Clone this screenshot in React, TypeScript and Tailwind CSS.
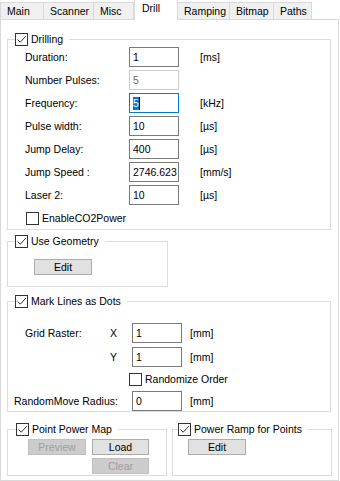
import React from 'react';

const tabs = [
  { label: 'Main', w: 'w-[44px]' },
  { label: 'Scanner', w: 'w-[51px]' },
  { label: 'Misc', w: 'w-[41px]' },
  { label: 'Drill', w: 'w-[44px]', active: true },
  { label: 'Ramping', w: 'w-[53px]' },
  { label: 'Bitmap', w: 'w-[45px]' },
  { label: 'Paths', w: 'w-[39px]' },
];

function Check({ checked }: { checked?: boolean }) {
  return (
    <span className="flex h-[13px] w-[13px] shrink-0 items-center justify-center border border-[#333333] bg-white">
      {checked && (
        <svg width="11" height="11" viewBox="0 0 11 11">
          <path d="M1.5 5.5 L4.2 8.2 L9.8 2.2" fill="none" stroke="#333333" strokeWidth="1" />
        </svg>
      )}
    </span>
  );
}

function TextBox({ value, disabled, focused }: { value: string; disabled?: boolean; focused?: boolean }) {
  return (
    <div
      className={
        'flex h-[20px] w-[50px] shrink-0 items-center bg-white pl-[3px] ' +
        (disabled
          ? 'border border-[#cccccc] text-[#6d6d6d]'
          : focused
            ? 'border border-[#0078d7]'
            : 'border border-[#7a7a7a]')
      }
    >
      {focused ? (
        <>
          <span className="bg-[#0078d7] text-white">{value}</span>
          <span className="h-[13px] w-px bg-black" />
        </>
      ) : (
        value
      )}
    </div>
  );
}

function Button({ label, disabled, className = '' }: { label: string; disabled?: boolean; className?: string }) {
  return (
    <div
      className={
        'flex h-[16px] items-center justify-center border ' +
        (disabled ? 'border-[#bfbfbf] bg-[#cccccc] text-[#838383] ' : 'border-[#adadad] bg-[#e1e1e1] ') +
        className
      }
    >
      {label}
    </div>
  );
}

function Legend({ label, offset }: { label: string; offset: string }) {
  return (
    <legend className={'flex h-[13px] items-center gap-[3px] pr-[6px] ' + offset}>
      <Check checked />
      <span>{label}</span>
    </legend>
  );
}

const drillRows = [
  { label: 'Duration:', value: '1', unit: '[ms]' },
  { label: 'Number Pulses:', value: '5', unit: '', disabled: true, labelClass: 'text-[#222]' },
  { label: 'Frequency:', value: '5', unit: '[kHz]', focused: true },
  { label: 'Pulse width:', value: '10', unit: '[µs]' },
  { label: 'Jump Delay:', value: '400', unit: '[µs]' },
  { label: 'Jump Speed :', value: '2746.623', unit: '[mm/s]' },
  { label: 'Laser 2:', value: '10', unit: '[µs]' },
];

export default function App() {
  return (
    <div className="h-[481px] w-[340px] overflow-hidden bg-white font-['Liberation_Sans',Arial,sans-serif] text-[10.5px] leading-[13px] text-black">
      {/* tab strip */}
      <div className="flex h-[19px] items-end">
        {tabs.map((t) =>
          t.active ? (
            <div
              key={t.label}
              className={'relative z-10 -mb-px flex h-[21px] items-start border-x border-t border-[#d9d9d9] bg-white pl-[7px] pt-[2px] ' + t.w}
            >
              {t.label}
            </div>
          ) : (
            <div
              key={t.label}
              className={'-ml-px flex h-[17px] items-center border border-b-0 border-[#d9d9d9] bg-[#f0f0f0] pl-[6px] pt-[1px] first:ml-0 ' + t.w}
            >
              {t.label}
            </div>
          )
        )}
      </div>

      {/* tab page */}
      <div className="h-[462px] w-[339px] border border-[#d9d9d9] bg-white px-[6px]">
        {/* Drilling */}
        <fieldset className="mt-[13px] w-[324px] border border-[#dcdcdc] pb-[4px]">
          <Legend label="Drilling" offset="ml-[7px]" />
          <div className="flex flex-col gap-[3px] pl-[17px] pt-[1px]">
            {drillRows.map((r) => (
              <div key={r.label} className="flex h-[20px] items-center">
                <span className="w-[104px]">{r.label}</span>
                <TextBox value={r.value} disabled={r.disabled} focused={r.focused} />
                <span className="pl-[21px]">{r.unit}</span>
              </div>
            ))}
          </div>
          <div className="ml-[18px] mt-[7px] flex items-center gap-[3px]">
            <Check />
            <span>EnableCO2Power</span>
          </div>
        </fieldset>

        {/* Use Geometry */}
        <fieldset className="mt-[5px] w-[161px] border border-[#dcdcdc] pb-[11px]">
          <Legend label="Use Geometry" offset="ml-[7px]" />
          <div className="pl-[26px] pt-[11px]">
            <Button label="Edit" className="w-[58px]" />
          </div>
        </fieldset>

        {/* Mark Lines as Dots */}
        <fieldset className="mt-[8px] w-[324px] border border-[#dcdcdc]">
          <Legend label="Mark Lines as Dots" offset="ml-[7px]" />
          <div className="flex flex-col pt-[15px]">
            <div className="flex h-[20px] items-center pl-[17px]">
              <span className="w-[85px]">Grid Raster:</span>
              <span className="w-[22px]">X</span>
              <TextBox value="1" />
              <span className="pl-[8px]">[mm]</span>
            </div>
            <div className="mt-[4px] flex h-[20px] items-center pl-[102px]">
              <span className="w-[22px]">Y</span>
              <TextBox value="1" />
              <span className="pl-[8px]">[mm]</span>
            </div>
            <div className="ml-[121px] mt-[6px] flex items-center gap-[3px]">
              <Check />
              <span>Randomize Order</span>
            </div>
            <div className="mt-[5px] flex h-[20px] items-center pl-[6px]">
              <span className="w-[118px]">RandomMove Radius:</span>
              <TextBox value="0" />
              <span className="pl-[8px]">[mm]</span>
            </div>
          </div>
        </fieldset>

        {/* bottom pair */}
        <div className="mt-[11px] flex gap-[5px]">
          <fieldset className="h-[53px] w-[160px] border border-[#dcdcdc]">
            <Legend label="Point Power Map" offset="ml-[8px]" />
            <div className="flex gap-[6px] pl-[20px] pt-[3px]">
              <Button label="Preview" disabled className="w-[58px] text-[#a0a0a0]" />
              <div className="flex flex-col gap-[3px]">
                <Button label="Load" className="w-[57px]" />
                <Button label="Clear" disabled className="w-[57px] text-[#a0a0a0]" />
              </div>
            </div>
          </fieldset>
          <fieldset className="h-[53px] w-[160px] border border-[#dcdcdc]">
            <Legend label="Power Ramp for Points" offset="ml-[5px]" />
            <div className="pl-[15px] pt-[3px]">
              <Button label="Edit" className="w-[58px]" />
            </div>
          </fieldset>
        </div>
      </div>
    </div>
  );
}
